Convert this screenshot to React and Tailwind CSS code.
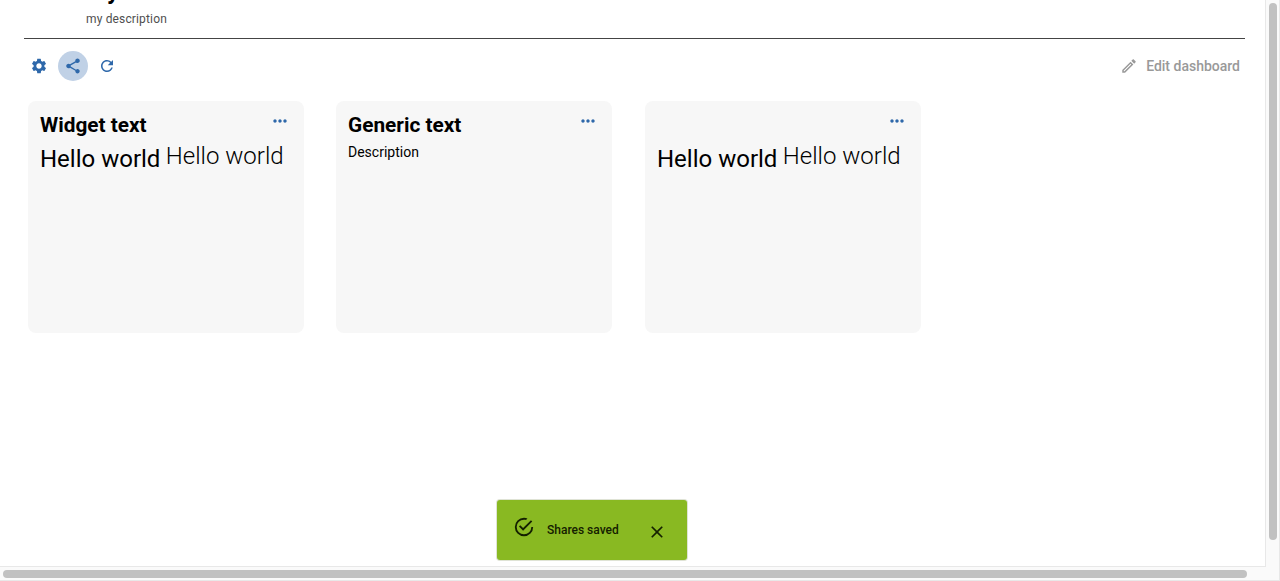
import { MdSettings, MdShare, MdRefresh, MdMoreHoriz, MdOutlineEdit, MdClose } from "react-icons/md";

function SuccessIcon({ className }) {
  return (
    <svg viewBox="0 0 24 24" width="22" height="22" fill="currentColor" className={className} aria-hidden="true">
      <path d="M20,12A8,8 0 0,1 12,20A8,8 0 0,1 4,12A8,8 0 0,1 12,4C12.76,4 13.5,4.11 14.2,4.31L15.77,2.74C14.61,2.26 13.34,2 12,2A10,10 0 0,0 2,12A10,10 0 0,0 12,22A10,10 0 0,0 22,12M7.91,10.08L6.5,11.5L11,16L21,6L19.59,4.58L11,13.17L7.91,10.08Z" />
    </svg>
  );
}

function HelloWorld() {
  return (
    <div className="mt-[5px] flex gap-[5.4px] whitespace-pre text-2xl leading-7">
      <span className="mt-[3px]">Hello world</span>
      <span className="font-light">Hello world</span>
    </div>
  );
}

function Widget({ title, children }) {
  return (
    <article className="h-[232px] w-[276px] shrink-0 rounded-lg bg-[#f7f7f7] px-3 pt-3">
      <header className="flex h-6 justify-between">
        <h2 className="text-[20.8px] font-bold leading-6">{title}</h2>
        <button className="-mt-0.5 mr-0.5 h-5 text-[#2e68aa]" aria-label="More actions">
          <MdMoreHoriz size={20} />
        </button>
      </header>
      {children}
    </article>
  );
}

export default function App() {
  return (
    <div className="flex h-[581px] w-[1280px] flex-col overflow-hidden bg-white font-['Roboto',sans-serif] text-black">
      <div className="flex h-[566px]">
        <main className="flex w-[1265px] flex-col overflow-hidden">
          <header className="ml-6 mr-5 h-[39px] shrink-0 border-b border-[#444444] pl-[62px]">
            <h1 className="-mt-[25px] text-2xl font-bold leading-8">My dashboard</h1>
            <p className="mt-1 text-xs leading-4 tracking-[0.15px] text-[#4f4f4f]">my description</p>
          </header>
          <div className="ml-6 mr-5 mt-3 flex h-[30px] shrink-0 items-center justify-between text-[#2e68aa]">
            <div className="flex gap-1">
              <button className="grid size-[30px] place-items-center rounded-full" aria-label="Settings"><MdSettings size={18} /></button>
              <button className="grid size-[30px] place-items-center rounded-full bg-[#c0d1e6]" aria-label="Share"><MdShare size={18} /></button>
              <button className="grid size-[30px] place-items-center rounded-full" aria-label="Refresh"><MdRefresh size={18} /></button>
            </div>
            <button className="mr-[5px] flex items-center gap-2 text-sm font-medium text-[#999999]">
              <MdOutlineEdit size={18} />
              Edit dashboard
            </button>
          </div>
          <div className="ml-7 mt-5 flex">
            <Widget title="Widget text"><HelloWorld /></Widget>
            <div className="w-8 shrink-0" />
            <Widget title="Generic text"><p className="mt-[5px] text-sm leading-5">Description</p></Widget>
            <div className="w-[33px] shrink-0" />
            <Widget title=""><HelloWorld /></Widget>
          </div>
          <div className="ml-[497px] mt-[167px] flex h-[60px] w-[190px] shrink-0 items-center rounded-[3px] bg-[#89b922] text-[#142000] shadow-[0_0_0_1px_#dfe3d5]" role="status">
            <SuccessIcon className="mb-[6px] ml-4" />
            <span className="ml-3 w-[72px] whitespace-nowrap text-xs font-medium">Shares saved</span>
            <button className="ml-7 mt-1" aria-label="Close"><MdClose size={20} /></button>
          </div>
        </main>
        <div className="h-[566px] w-[15px] border-x border-[#e8e8e8] bg-[#fafafa] pl-[3px] pt-[3px]">
          <div className="h-[537px] w-2 rounded-full bg-[#c1c1c1]" />
        </div>
      </div>
      <div className="flex h-[15px]">
        <div className="h-[15px] w-[1266px] border-y border-[#e8e8e8] bg-[#fafafa] pl-[3px] pt-[3px]">
          <div className="h-2 w-[1244px] rounded-full bg-[#c1c1c1]" />
        </div>
        <div className="w-[14px] border-b border-r border-[#e8e8e8] bg-[#fafafa]" />
      </div>
    </div>
  );
}
